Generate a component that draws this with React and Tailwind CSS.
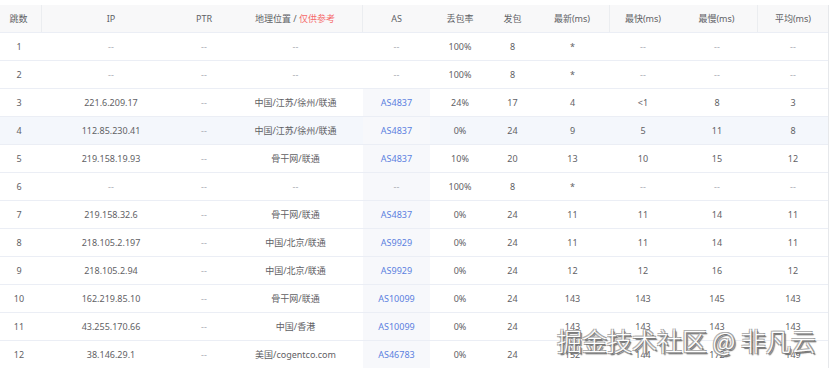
import React from 'react';

const COLS = 'grid grid-cols-[42px_138px_48px_135px_67px_60px_45px_75px_66px_82px_70px]';

const HEAD = ['跳数', 'IP', 'PTR', 'GEO', 'AS', '丢包率', '发包', '最新(ms)', '最快(ms)', '最慢(ms)', '平均(ms)'];

const ROWS = [
    ['1', '--', '--', '--', '--', '100%', '8', '*', '--', '--', '--'],
    ['2', '--', '--', '--', '--', '100%', '8', '*', '--', '--', '--'],
    ['3', '221.6.209.17', '--', '中国/江苏/徐州/联通', 'AS4837', '24%', '17', '4', '<1', '8', '3'],
    ['4', '112.85.230.41', '--', '中国/江苏/徐州/联通', 'AS4837', '0%', '24', '9', '5', '11', '8'],
    ['5', '219.158.19.93', '--', '骨干网/联通', 'AS4837', '10%', '20', '13', '10', '15', '12'],
    ['6', '--', '--', '--', '--', '100%', '8', '*', '--', '--', '--'],
    ['7', '219.158.32.6', '--', '骨干网/联通', 'AS4837', '0%', '24', '11', '11', '14', '11'],
    ['8', '218.105.2.197', '--', '中国/北京/联通', 'AS9929', '0%', '24', '11', '11', '14', '11'],
    ['9', '218.105.2.94', '--', '中国/北京/联通', 'AS9929', '0%', '24', '12', '12', '16', '12'],
    ['10', '162.219.85.10', '--', '骨干网/联通', 'AS10099', '0%', '24', '143', '143', '145', '143'],
    ['11', '43.255.170.66', '--', '中国/香港', 'AS10099', '0%', '24', '143', '143', '143', '143'],
    ['12', '38.146.29.1', '--', '美国/cogentco.com', 'AS46783', '0%', '24', '152', '144', '172', '149'],
];

// header cells that carry a faint divider on their right
const DIVIDED = [0, 3, 7, 9];

function Cell({ value, col, rowIdx }) {
    const isDash = value === '--';
    const isAs = col === 4;
    const asBg = isAs && rowIdx >= 2 ? 'bg-[#f7f8fb]' : '';
    const color = isDash ? 'text-[#a8abb2]' : isAs ? 'text-[#5b7fe0]' : 'text-[#5f6165]';
    return (
        <div className={`flex items-center justify-center h-[27px] ${col === 0 ? 'pr-[4px]' : ''} ${asBg} ${color}`}>
            {value}
        </div>
    );
}

export default function App() {
    return (
        <div className="relative w-[832px] h-[368px] overflow-hidden bg-white pt-[5px] text-[9px] font-['Noto_Sans','Noto_Sans_CJK_SC',sans-serif]">
            <div className="w-[829px] border-r border-[#e6e8eb]">
                <div className={`${COLS} bg-[#f8f8f9] border-b border-[#ebeef5] text-[#606266]`}>
                    {HEAD.map((h, i) => (
                        <div
                            key={i}
                            className={`flex items-center justify-center h-[27px] ${i === 0 ? 'pr-[4px]' : ''} ${DIVIDED.includes(i) ? 'border-r border-[#ebedf0]' : ''}`}
                        >
                            {h === 'GEO' ? (
                                <span>地理位置 / <span className="text-[#f56c6c]">仅供参考</span></span>
                            ) : h}
                        </div>
                    ))}
                </div>
                {ROWS.map((row, r) => (
                    <div key={r} className={`${COLS} border-b border-[#ebeef5] ${r === 3 ? 'bg-[#f4f7fc]' : ''}`}>
                        {row.map((v, c) => (
                            <Cell key={c} value={v} col={c} rowIdx={r} />
                        ))}
                    </div>
                ))}
            </div>
            <div className="absolute left-[557px] top-[328px] text-[25px] leading-none font-light text-white font-['Noto_Sans_CJK_SC',sans-serif] [text-shadow:1px_1px_0_#7a7a7a,-1px_-1px_0_#b0b0b0,1px_-1px_0_#a0a0a0,-1px_1px_0_#a0a0a0,2px_2px_1px_#666]">
                掘金技术社区 @ 非凡云
            </div>
        </div>
    );
}
